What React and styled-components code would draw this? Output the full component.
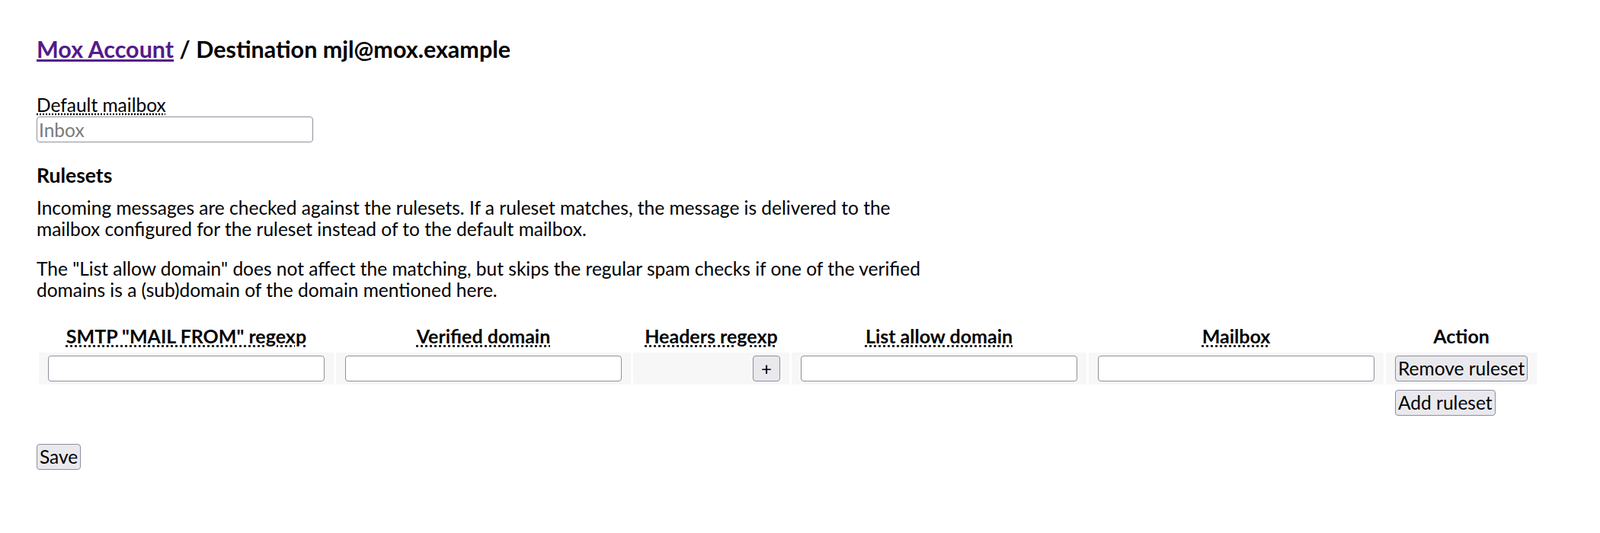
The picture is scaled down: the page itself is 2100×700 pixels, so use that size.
import React from "react";
import styled, { createGlobalStyle } from "styled-components";

const GlobalStyle = createGlobalStyle`
    * {
        margin: 0;
        padding: 0;
        box-sizing: border-box;
        font-size: inherit;
        font-family: Lato, "Liberation Sans", sans-serif;
    }
    html {
        padding: 0;
        font-size: 24.5px;
        color: #000;
        background: #fff;
    }
    body {
        margin: 0;
        padding: 48px;
    }
`;

const Title = styled.h1`
    font-size: 30.5px;
    font-weight: bold;
    line-height: 33px;
    margin-bottom: 43px;

    a {
        color: #551a8b;
        text-decoration: underline;
    }
`;

const Field = styled.label`
    display: block;
    margin-bottom: 28px;
`;

const Hint = styled.span`
    display: block;
    line-height: 28px;
    margin-bottom: 1px;

    span {
        text-decoration: underline dotted;
    }
`;

const TextInput = styled.input`
    display: block;
    width: 363px;
    height: 34px;
    padding: 0 2px;
    border: 1px solid #8f8f9d;
    border-radius: 4px;
    background: #fff;
    font-size: 24.5px;
    color: #000;

    &::placeholder {
        color: #7a7a7a;
    }
`;

const SubTitle = styled.h2`
    font-size: 26.5px;
    font-weight: bold;
    line-height: 30px;
    margin-bottom: 14px;
`;

const Para = styled.p`
    max-width: 1200px;
    line-height: 27.6px;
    margin-bottom: 25px;
`;

const Table = styled.table`
    border-spacing: 3px;
    margin-bottom: 30px;
`;

const Th = styled.th`
    font-size: 25px;
    font-weight: bold;
    text-align: center;
    padding: 5px 12px;
    line-height: 28px;
    min-width: ${(props) => props.min || 0}px;
`;

const Tip = styled.span`
    text-decoration: underline dotted;
`;

const Td = styled.td`
    background: ${(props) => (props.plain ? "transparent" : "#f7f7f7")};
    padding: 4px 12px;
    vertical-align: middle;
    text-align: ${(props) => props.align || "left"};
`;

const Button = styled.button`
    font-size: 24.5px;
    line-height: 30px;
    padding: 1px 3px;
    color: #000;
    background: #e9e9ed;
    border: 1px solid #8f8f9d;
    border-radius: 4px;
    cursor: pointer;
`;

const SmallButton = styled(Button)`
    width: 36px;
    height: 34px;
    padding: 0;
    font-size: 24px;
    line-height: 30px;
`;

export default function App() {
    return (
        <>
            <GlobalStyle />
            <Title>
                <a href="#">Mox Account</a> / Destination mjl@mox.example
            </Title>
            <Field>
                <Hint>
                    <span title="Default mailbox">Default mailbox</span>
                </Hint>
                <TextInput placeholder="Inbox" />
            </Field>

            <SubTitle>Rulesets</SubTitle>
            <Para>
                Incoming messages are checked against the rulesets. If a
                ruleset matches, the message is delivered to the mailbox
                configured for the ruleset instead of to the default mailbox.
            </Para>
            <Para>
                The "List allow domain" does not affect the matching, but skips
                the regular spam checks if one of the verified domains is a
                (sub)domain of the domain mentioned here.
            </Para>

            <Table>
                <thead>
                    <tr>
                        <Th>
                            <Tip title="Matches SMTP MAIL FROM">SMTP "MAIL FROM" regexp</Tip>
                        </Th>
                        <Th>
                            <Tip title="Matches verified domain">Verified domain</Tip>
                        </Th>
                        <Th min={205}>
                            <Tip title="Header regexp">Headers regexp</Tip>
                        </Th>
                        <Th>
                            <Tip title="List allow domain">List allow domain</Tip>
                        </Th>
                        <Th>
                            <Tip title="Mailbox">Mailbox</Tip>
                        </Th>
                        <Th>Action</Th>
                    </tr>
                </thead>
                <tbody>
                    <tr>
                        <Td>
                            <TextInput />
                        </Td>
                        <Td>
                            <TextInput />
                        </Td>
                        <Td align="right">
                            <SmallButton>+</SmallButton>
                        </Td>
                        <Td>
                            <TextInput />
                        </Td>
                        <Td>
                            <TextInput />
                        </Td>
                        <Td>
                            <Button>Remove ruleset</Button>
                        </Td>
                    </tr>
                </tbody>
                <tfoot>
                    <tr>
                        <Td plain colSpan={5}></Td>
                        <Td plain>
                            <Button>Add ruleset</Button>
                        </Td>
                    </tr>
                </tfoot>
            </Table>
            <Button>Save</Button>
        </>
    );
}
